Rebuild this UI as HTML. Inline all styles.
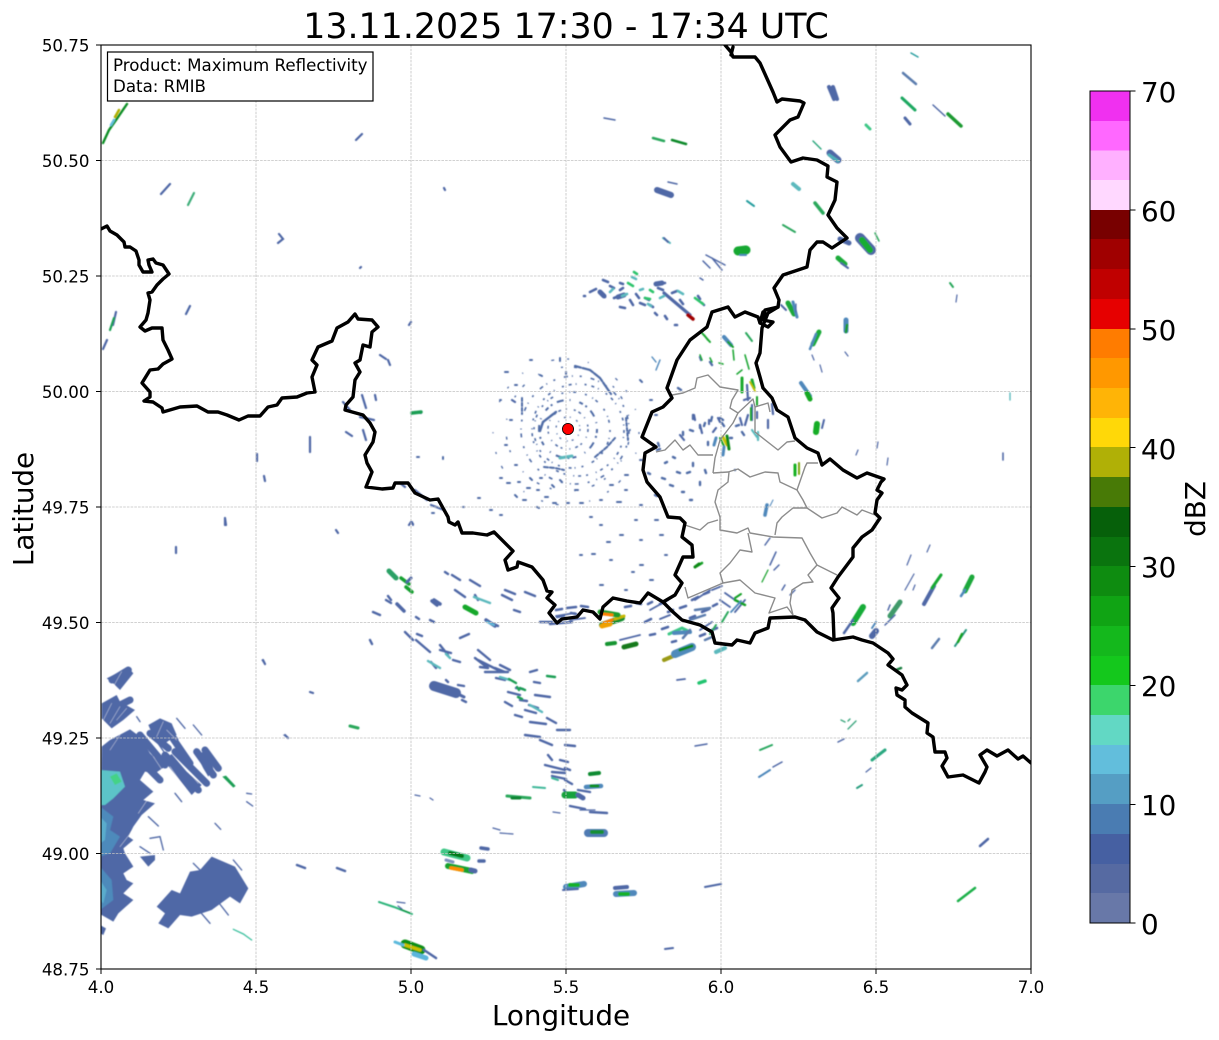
<!DOCTYPE html>
<html><head><meta charset="utf-8"><title>Radar</title>
<style>
html,body{margin:0;padding:0;background:#fff;width:1219px;height:1040px;overflow:hidden}
svg{display:block}
text{font-family:"DejaVu Sans",sans-serif;fill:#000}
.t{font-size:16.67px}
.c{font-size:27.78px}
.e path{stroke-linecap:round}
</style></head><body>
<svg width="1219" height="1040" viewBox="0 0 1219 1040" xmlns="http://www.w3.org/2000/svg">
<defs><clipPath id="ax"><rect x="101" y="45" width="930" height="924"/></clipPath>
<filter id="s" x="-5%" y="-5%" width="110%" height="110%"><feGaussianBlur stdDeviation=".4"/></filter></defs>
<rect width="1219" height="1040" fill="#fff"/>
<text x="566" y="38" style="font-size:34.8px" text-anchor="middle">13.11.2025 17:30 - 17:34 UTC</text>

<g clip-path="url(#ax)">
<g filter="url(#s)" class="e">
<!-- SW echoes -->
<g transform="translate(100 640) scale(.33333)">
<g fill="#4f68a6">
<path d="M5 320 30 300 90 268 120 290 150 340 165 355 195 380 165 400 135 395 120 420 160 455 130 480 165 490 125 525 100 560 85 590 100 600 70 625 75 640 100 680 70 700 80 720 100 730 70 760 100 780 55 820 40 845 5 825 0 825Z"/>
<path d="M20 115 85 82 100 100 60 150 40 130Z"/>
<path d="M5 190 50 165 60 185 105 210 70 240 35 265 5 235Z"/>
<path d="M145 255 180 235 215 250 230 285 195 310 165 300Z"/>
<path d="M190 360 215 342 260 395 305 435 275 465 235 415Z"/>
<path d="M290 345 320 330 340 385 325 410 310 385Z"/>
<path d="M120 650 165 645 165 660 145 680Z"/>
<path d="M170 800 215 750 240 760 270 695 300 690 335 650 405 680 445 745 420 790 390 770 335 810 275 830 240 825 205 865 175 850 195 820Z"/>
<path d="M0 855 18 865 10 885 0 880Z"/>
</g>
<g fill="none" stroke="#4f68a6" stroke-width="4">
<path d="M230 235 255 265M280 255 305 285M240 325 262 358M225 460 245 485M145 530 175 558M150 595 180 590 190 630M120 620 150 640M110 230 120 245M160 290 195 340M400 660 425 690M280 670 300 690M350 780 385 825M300 815 330 850M440 460 455 462M440 485 458 498M345 550 362 568"/>
</g>
<g fill="none" stroke="#4f68a6" stroke-width="21">
<path d="M180 250 225 300M150 280 205 325M215 290 270 370M195 345 295 450M225 335 320 430M290 335 340 405M315 330 355 385M75 315 180 420M120 285 195 375M36 120 85 90M30 210 90 180"/>
</g>
<path d="M0 390 60 395 75 440 40 475 15 495 0 495Z" fill="#5cc4c8"/>
<path d="M30 410 50 400 65 425 45 435Z" fill="#44d286"/>
<path d="M0 500 40 530 30 570 60 590 30 640 0 650ZM0 680 35 720 40 780 0 810Z" fill="#4d8abb"/>
<path d="M0 530 20 550 15 600 0 610ZM0 720 20 750 10 790 0 780Z" fill="#5aaccc"/>
<g fill="none" stroke="#fff" stroke-width="1.6" opacity=".6">
<path d="M10 240 35 190M30 250 60 200M50 240 80 205M40 140 65 95M30 330 60 285M170 290 190 245M210 380 255 445M115 520 145 475M60 620 95 575M240 740 255 715M160 350 190 395M200 270 230 300M270 400 295 430"/>
</g>
<path d="M367 410 378 407 407 438 400 443Z" fill="#1f9f55"/>
<path d="M400 868 430 882 455 900" fill="none" stroke="#3fc1a0" stroke-width="4"/>
<path d="M485 60 495 75M550 285 565 295M592 675 600 678" fill="none" stroke="#4f68a6" stroke-width="2"/>
</g>

<!-- radar speckle rings -->
<g fill="none" stroke="#4f6ca6">
<circle cx="568" cy="429" r="12" stroke-width="1.3" stroke-dasharray="2 4 1 6"/>
<circle cx="568" cy="429" r="20" stroke-width="1.5" stroke-dasharray="3 5 1 7 2 3"/>
<circle cx="568" cy="429" r="29" stroke-width="2" stroke-dasharray="4 3 2 5 7 6 1 9"/>
<circle cx="572" cy="430" r="38" stroke-width="1.6" stroke-dasharray="2 6 1 3 3 9"/>
<circle cx="578" cy="430" r="46" stroke-width="1.6" stroke-dasharray="3 4 1 8 2 5"/>
<circle cx="575" cy="430" r="54" stroke-width="1.6" stroke-dasharray="4 4 1 7 2 9"/>
<circle cx="568" cy="429" r="62" stroke-width="1.4" stroke-dasharray="2 11 3 17 1 23"/>
<circle cx="566" cy="432" r="73" stroke-width="1.3" stroke-dasharray="2 19 1 31 3 13"/>
<path d="M575 366 590 370 600 378 611 394" stroke-width="2.2" stroke-dasharray="6 2 4 1"/>
<path d="M544 467 555 468 564 470M595 457 607 447 615 438" stroke-width="2" stroke-dasharray="4 2"/>
<path d="M540 431 543 422 552 415 556 412" stroke-width="2.4" stroke-dasharray="5 1"/>
<path d="M522 398 522 414M626 418 628 440" stroke-width="2" stroke-dasharray="3 2"/>
<path d="M560 458 572 456" stroke="#5cb9bd" stroke-width="3"/>
<!-- scattered south field -->
<path stroke-width="2" d="M500 478h2M507 483h3M518 482h2M530 478l2 2M540 478h2M527 488h3M537 490h2M552 485l2 2M523 500h3M537 507l2 1M553 503h3M567 503h2M580 503h3M590 517h2M607 542h3M580 555h2M592 554h3M632 572h2M617 502h4M635 520h2M490 510h2M500 515h2M463 507h1M478 498h2M443 457v2M417 457h2M412 522l1 3M432 513h2M515 495l2 2M545 497h3M560 480l2 2M575 490h3M600 500h2M610 485h3M625 490h2M640 505h2M655 520h3M600 525h2M620 535h3M640 540h2M660 535h3M610 560h2M640 565h3M665 555h2M600 585h3M625 590h2M650 580h3M515 385h2M505 372h3M540 375l2 1M530 360h2M560 358v3M566 372v2M500 400h1M510 420h2M650 400h2M640 380l2 2M655 415h2M640 460h2M625 475h3M505 445h2M515 465h2"/>
<!-- Luxembourg speckle -->
<path stroke-width="2.4" d="M678 388l3 2M700 357l1 3M710 362l2 3M693 415v4M700 425v3M712 417l-1 4M720 418l3 2M683 432v3M722 423l2 3M705 423l-1 3M673 457l2 1M687 473l3-1M693 463v3M677 472l3 1M662 478l3 1M700 482v3M648 473l2 1M665 463l2-1M658 443l1 3M657 450l3-1M670 485l3 1M690 500h2M655 495l2 1M682 492h2M705 470l1 3M708 442v3M735 470h0M690 430l3 1M742 432l2 3M736 426l3-1M730 438h2"/>
</g>

<!-- west speckle -->
<g fill="none" stroke="#4f68a6" stroke-width="2.2">
<path d="M343 402 350 410M360 417 374 420M363 430 366 440M415 412 421 413M362 395 366 408M375 395 376 400M346 432 352 436M310 437 310 452M257 454 257 461M264 476 265 481M225 518 226 525M176 547 176 553M336 530 338 533M400 483 405 487M415 490 427 500M431 505 444 510M411 522 413 524M409 525 411 522M380 355 386 359M388 360 390 365M409 325 411 322M360 268 361 267M279 234 283 239 278 243M186 314 190 306M116 312 113 325M103 349 107 340M161 194 170 184M362 134 356 140M444 188 445 190M512 400 515 402M225 518 225 525M263 660 265 664M310 692 313 693M285 735 288 738"/>
<path d="M188 205 194 193" stroke="#3fae7a"/>
<path d="M114 318 110 330" stroke="#1f9f55"/>
<path d="M412 413 421 412" stroke="#1f9f55" stroke-width="3.5"/>
</g>
<path d="M103 143 109 130 116 120 127 104" fill="none" stroke="#0f8f25" stroke-width="2.4"/>
<path d="M115 117 119 110" stroke="#b0b006" stroke-width="2.5" fill="none"/>
<path d="M111 125 114 120" stroke="#62bedc" stroke-width="2.5" fill="none"/>

<!-- central north cluster -->
<g fill="none" stroke="#4f68a6" stroke-width="2.6">
<path d="M603 280l5 2M590 292l6-3M584 296h1M600 292l5 5M614 298l8-3M610 286l4 2M620 283l3 1M645 298l4 2M640 303l5 2M620 307l5 1M657 284l8-1M658 288l5 2M630 300l3 5M636 294l3 4M620 290l3-2M650 305l3 2M672 293l5-2M655 313l2 2M665 316l2 3M675 325h2M680 300l3 4M698 296l2 3M702 303l2 2" />
<path d="M600 292l4 4M618 297l6-2M656 284l6-1" stroke-width="5"/>
<path d="M664 293 690 315" stroke-width="3.2"/>
<path d="M632 277l4 2M622 296l5-2M648 304l3 2M678 291l5 3M610 292l3-3M640 290l3-1M660 298l4-2" stroke="#5cb9bd"/>
<path d="M628 283l5 3M650 290l3 2M645 298l5 1M695 298l8 6M634 272l3 2" stroke="#2fc46c"/>
<path d="M688 315 693 319" stroke="#a00000" stroke-width="3.5"/>
</g>

<!-- south-centre streak field -->
<g fill="none" stroke="#4f68a6" stroke-width="2.4">
<path d="M405 632 413 640M417 634 422 636M416 640 430 652M440 645 448 655M431 662 436 668M440 650 451 653M453 660 460 662M475 658 488 668M478 660 498 670M480 667 488 668M495 668 505 672M485 672 508 672M500 665 510 670M530 672 537 670M534 682 540 683M496 678 505 680M516 688 523 689M508 692 520 695M505 702 512 706M520 700 527 701M535 695 550 697M525 710 536 713M515 715 522 717M529 705 538 708M547 718 556 723M530 722 546 724M557 730 570 730M525 735 540 737M540 740 552 745M565 745 575 746M548 755 552 760M560 760 568 762M565 768 570 770M545 765 565 770M552 772 565 773M565 780 572 784M552 776 566 779M564 790 568 795M578 790 590 792M570 806 585 809M590 812 607 813M373 612 380 615M386 600 391 603M388 596 391 600M416 617 419 619M430 620 434 622M460 638 469 634M478 650 490 660M370 640 372 644M458 685 464 686M446 680 448 682M462 700 466 702M514 610 520 612M540 622 552 622M550 624 572 622M494 624 498 626M475 595 478 600M505 590 515 594M525 592 535 596M452 575 460 580M445 572 448 574M470 580 480 586M502 595 512 600M455 590 465 597"/>
<path d="M434 686 456 693" stroke-width="10"/>
<path d="M458 694 464 697" stroke-width="3"/>
<path d="M474 597 490 603" stroke="#5cb9bd"/>
<path d="M428 661 440 668M446 654 450 658M530 705 542 712M500 677 510 680" stroke="#5cb9bd"/>
<path d="M509 679 516 683M517 687 519 690M518 697 522 699M520 688 525 690M547 676 555 677" stroke="#1f9f55"/>
<path d="M465 607 476 613" stroke="#14a82c" stroke-width="5"/>
<path d="M434 600 440 604M397 604 404 611M432 601 437 605" stroke-width="3.5"/>
<path d="M389 571 396 578" stroke="#2aa065" stroke-width="5"/>
<path d="M401 578 409 584" stroke="#14a030" stroke-width="3.5"/>
<path d="M406 587 412 592" stroke="#14a030" stroke-width="3.5"/>
<path d="M411 578 407 582" stroke-width="3"/>
<path d="M486 620 495 626" stroke-width="3.5"/>
<path d="M487 622 494 625" stroke="#62bedc" stroke-width="2"/>
</g>

<!-- bottom echoes -->
<g fill="none">
<path d="M507 796 530 798" stroke="#2aa85c" stroke-width="3"/><path d="M512 798 520 798" stroke="#0c8530" stroke-width="3"/>
<path d="M533 787 545 788M552 778 558 780" stroke="#3fb89a" stroke-width="2"/>
<path d="M565 795 575 795" stroke="#16a23c" stroke-width="7"/><path d="M578 795 583 798" stroke="#4f68a6" stroke-width="5"/>
<path d="M590 774 599 773" stroke="#0e8b30" stroke-width="4"/>
<path d="M586 787 601 786" stroke="#4f88bb" stroke-width="4.5"/><path d="M591 786 598 786" stroke="#0e8f20" stroke-width="3"/>
<path d="M588 833 604 833" stroke="#4f7ab3" stroke-width="8"/><path d="M592 832 602 832" stroke="#158f35" stroke-width="4"/>
<path d="M444 852 467 858" stroke="#3fc887" stroke-width="7"/><path d="M450 853 462 856" stroke="#067a12" stroke-width="4"/>
<path d="M448 866 472 871" stroke="#14a22e" stroke-width="6"/><path d="M451 868 462 870" stroke="#ff8c00" stroke-width="3.5"/><path d="M471 870 475 871" stroke="#4f68a6" stroke-width="5"/>
<path d="M479 861 484 861M481 848 488 849" stroke="#4f68a6" stroke-width="3.5"/>
<path d="M446 860 453 862" stroke="#7a92bd" stroke-width="3"/>
<path d="M566 887 584 884" stroke="#4f88bb" stroke-width="6"/><path d="M570 885 578 885" stroke="#14b02a" stroke-width="4"/><path d="M563 890 578 889" stroke="#4f68a6" stroke-width="2"/>
<path d="M616 894 634 893" stroke="#4f88bb" stroke-width="6"/><path d="M620 894 628 894" stroke="#14b02a" stroke-width="4"/><path d="M615 888 627 887" stroke="#4f68a6" stroke-width="4"/>
<path d="M379 902 394 907 412 914" stroke="#2fb57b" stroke-width="2"/>
<path d="M400 909 410 913" stroke="#0f9030"/>
<path d="M397 902 405 903M398 906 402 909" stroke="#4f68a6" stroke-width="1.2"/>
<path d="M405 944 421 950" stroke="#0c8f18" stroke-width="9"/><path d="M405 945 420 950" stroke="#c8c000" stroke-width="3.5"/>
<path d="M395 942 403 945" stroke="#5cb9dc" stroke-width="3"/>
<path d="M414 954 426 958" stroke="#5bb5dc" stroke-width="5"/>
<path d="M424 950 436 958" stroke="#4f68a6" stroke-width="2.5"/>
<path d="M705 887 721 884M665 949 673 948" stroke="#4f68a6" stroke-width="2"/>
<path d="M415 795 420 796M430 798 433 800M493 828 500 830M500 833 513 834M553 812 560 813M580 810 595 810" stroke="#4f68a6" stroke-width="1.2"/>
<path d="M358 728 350 726" stroke="#2aa85c" stroke-width="3"/>
<path d="M337 868 345 871" stroke="#4f68a6" stroke-width="2.5"/><path d="M297 865 305 868" stroke="#4f68a6" stroke-width="2.5"/>
<path d="M695 746 707 744" stroke="#4f68a6" stroke-width="1.4"/>
</g>

<!-- dark echoes near border -->
<g fill="none">
<path stroke="#4f68a6" stroke-width="2.6" d="M556 610l6-1M567 608l9-1M581 606l7 1M557 617l7-1M571 613l5 1M625 607l6-1M636 603l5 1M648 604l4-2M660 604l5-2M645 622l6-3M668 612l5-2M680 608l6-2M692 600l6-3M704 594l5-2M650 635l5-1M662 629l6-2M690 618l5-2M702 612l7-3M713 606l4-2M672 642l4-1M700 636l5-2M712 630l5-2"/>
<path d="M602 625 622 618" stroke="#148f30" stroke-width="6"/><path d="M604 623 612 620" stroke="#ff7c00" stroke-width="3"/><path d="M615 619 624 616" stroke="#c8b800" stroke-width="3"/>
<path d="M602 626 610 624" stroke="#f0a000" stroke-width="5"/>
<path d="M600 612 618 615" stroke="#1e9b2a" stroke-width="5"/><path d="M603 614 612 615" stroke="#ff8000" stroke-width="3"/>
<path d="M607 644 615 643" stroke="#179530" stroke-width="4"/>
<path d="M624 647 636 644" stroke="#127a1a" stroke-width="5"/>
<path d="M664 660 678 654" stroke="#9a9a14" stroke-width="4"/>
<path d="M675 654 692 647" stroke="#4f8abb" stroke-width="8"/><path d="M680 650 692 646" stroke="#0d8a1a" stroke-width="3"/>
<path d="M669 634 682 628 690 632" stroke="#3fc887" stroke-width="3"/><path d="M674 633 690 632" stroke="#4f88bb" stroke-width="4"/>
<path d="M699 683 705 681" stroke="#22c470" stroke-width="3.5"/>
<path d="M716 652 725 648" stroke="#5cb9bd" stroke-width="4"/>
<path d="M677 680 685 679M660 619 670 615M650 610 668 600M695 600 710 590M712 590 722 586M720 600 730 607M745 600 735 612M620 640 640 635M556 616 575 613M570 620 585 618M700 630 712 622M725 593 735 600" stroke="#4f68a6" stroke-width="1.8"/>
<path d="M690 620 705 615M695 610 710 608M683 638 690 630M705 640 712 637" stroke="#5c7dae" stroke-width="2.5"/>
<path d="M697 566 702 563M735 600 745 605" stroke="#14a028" stroke-width="2.5"/>
<path d="M722 622 728 612M710 634 716 625" stroke="#2aa85c" stroke-width="2"/>
</g>

<!-- Luxembourg cluster -->
<g fill="none">
<path d="M702 333 710 342M704 335 708 340" stroke="#1aa832" stroke-width="2"/>
<path d="M724 337 731 345" stroke="#4f88bb" stroke-width="4"/><path d="M728 342 733 347" stroke="#14a028" stroke-width="2"/>
<path d="M746 333 752 341" stroke="#2aa85c" stroke-width="2"/>
<path d="M745 355 749 369M742 370 737 374M700 355 702 360M710 358 712 362M719 363 723 364M733 350 734 360" stroke="#22a838" stroke-width="1.6"/>
<path d="M742 378 742 392M752 380 754 388" stroke="#1cab2e" stroke-width="3"/><path d="M750 382 755 391" stroke="#c0c000" stroke-width="1.8"/>
<path d="M747 385 748 400M744 400 750 398M752 405 752 420M748 415 745 425M757 412 757 418M768 420 768 428M772 404 773 414M740 418 742 425M718 418 720 422M713 432 716 428M700 425 702 433M694 415 695 420M709 420 709 424M680 435 684 440" stroke="#4f68a6" stroke-width="2.2"/>
<path d="M751 408 751 420M757 397 757 405" stroke="#14a028" stroke-width="2"/>
<path d="M720 438 724 446" stroke="#14a028" stroke-width="2"/><path d="M723 437 727 445" stroke="#c4c400" stroke-width="3"/><path d="M727 436 729 449" stroke="#0c8a18" stroke-width="3"/>
<path d="M716 438 714 445M724 447 723 455" stroke="#4f88bb" stroke-width="3"/>
<path d="M752 430 757 437M758 432 758 440" stroke="#5cb9bd" stroke-width="2.2"/>
<path d="M795 465 795 475" stroke="#14b020" stroke-width="3"/><path d="M799 463 799 474" stroke="#7aa80c" stroke-width="2"/>
<path d="M767 505 765 515" stroke="#4f88bb" stroke-width="3.5"/><path d="M773 500 770 506" stroke="#4f88bb" stroke-width="1"/>
<path d="M695 567 699 564" stroke="#0c8a18" stroke-width="3"/>
<path d="M770 538 765 545M776 552 770 565M779 565 774 570M785 585 782 590M795 590 790 595" stroke="#4f68a6" stroke-width="1.5"/>
<path d="M768 570 762 582" stroke="#14a028" stroke-width="1.2"/>
<path d="M741 601 731 612" stroke="#4f88bb" stroke-width="1.8"/>
<path d="M735 598 741 594" stroke="#14a028" stroke-width="2"/>
<path d="M660 360 656 370M652 357 656 362" stroke="#4f88bb" stroke-width="1.4"/>
<path d="M788 303 794 314" stroke="#1ca83a" stroke-width="5"/><path d="M793 302 797 317" stroke="#4f88bb" stroke-width="3"/><path d="M781 305 786 310" stroke="#4f68a6" stroke-width="2"/>
<path d="M813 344 819 332" stroke="#1cab3a" stroke-width="5"/><path d="M810 349 816 334" stroke="#4f88bb" stroke-width="2.5"/>
<path d="M846 320 846 331" stroke="#4f88bb" stroke-width="5"/><path d="M847 325 846 332" stroke="#1a9a2a" stroke-width="2.5"/>
<path d="M801 383 810 396" stroke="#4f88bb" stroke-width="4"/><path d="M807 393 810 399" stroke="#14a824" stroke-width="5"/>
<path d="M817 424 816 432" stroke="#14ad28" stroke-width="6"/><path d="M824 420 822 428" stroke="#4f68a6" stroke-width="2"/>
<path d="M796 304 796 312M820 365 822 372M812 355 814 360M845 352 848 356M856 455 858 450" stroke="#4f68a6" stroke-width="1.2"/>
<path d="M877 448 878 442M887 465 888 458" stroke="#4f68a6" stroke-width="1.2"/>
</g>

<!-- NE echoes -->
<g fill="none">
<path d="M829 87 834 99M833 87 837 99" stroke="#4f68a6" stroke-width="4"/>
<path d="M866 125 870 129" stroke="#3fc887" stroke-width="3"/>
<path d="M830 153 838 160" stroke="#4f68a6" stroke-width="7"/><path d="M829 155 838 161" stroke="#4fb0b8" stroke-width="3"/>
<path d="M813 141 821 149" stroke="#2fa880" stroke-width="1.5"/>
<path d="M793 184 799 189" stroke="#5cb9bd" stroke-width="4"/><path d="M747 201 754 206" stroke="#2a9fa0" stroke-width="2"/>
<path d="M783 225 795 232" stroke="#2fa860" stroke-width="2"/>
<path d="M815 203 823 213" stroke="#2aa85c" stroke-width="3.5"/>
<path d="M860 238 871 250" stroke="#4f68a6" stroke-width="10"/><path d="M862 240 870 250" stroke="#14ad30" stroke-width="6"/>
<path d="M875 233 879 241" stroke="#2aa85c" stroke-width="1.5"/><path d="M840 239 849 243" stroke="#4f68a6" stroke-width="5"/>
<path d="M838 258 845 264" stroke="#1cab3a" stroke-width="5"/>
<path d="M841 263 848 268" stroke="#4f68a6" stroke-width="2"/>
<path d="M738 251 746 250" stroke="#14a830" stroke-width="9"/><path d="M740 255 746 255" stroke="#4f88bb" stroke-width="2"/>
<path d="M706 255 725 265M712 258 722 270M703 261 710 268M700 278 703 280" stroke="#4f68a6" stroke-width="1.5"/>
<path d="M663 238 670 243" stroke="#5cb9bd" stroke-width="2"/><path d="M664 238 668 242" stroke="#4f68a6" stroke-width="2"/>
<path d="M657 190 671 195" stroke="#4f68a6" stroke-width="6"/><path d="M668 182 677 184" stroke="#4f68a6" stroke-width="1.5"/>
<path d="M653 138 664 141" stroke="#2aa85c" stroke-width="2.5"/><path d="M672 140 686 144" stroke="#0c8a2a" stroke-width="2.5"/>
<path d="M604 118 615 120" stroke="#4f68a6" stroke-width="1.5"/>
<path d="M903 73 916 84" stroke="#5c7dae" stroke-width="2.5"/>
<path d="M911 53 918 57" stroke="#2a9fa0" stroke-width="1.5"/>
<path d="M902 98 915 110" stroke="#1ca860" stroke-width="3"/>
<path d="M905 118 910 124" stroke="#4f68a6" stroke-width="3"/>
<path d="M933 105 945 116" stroke="#4f68a6" stroke-width="1.5"/>
<path d="M948 114 961 126" stroke="#1a9a30" stroke-width="3.5"/>
<path d="M950 283 953 287" stroke="#2aa85c" stroke-width="2"/>
<path d="M957 295 956 302" stroke="#4f68a6" stroke-width="1.2"/>
<path d="M1010 393 1010 400" stroke="#5cb9bd" stroke-width="1.4"/>
<path d="M1003 453 1003 460" stroke="#4f68a6" stroke-width="1.6"/>
</g>

<!-- SE echoes -->
<g fill="none">
<path d="M853 623 863 607" stroke="#16ac38" stroke-width="6"/><path d="M844 633 853 620" stroke="#4f68a6" stroke-width="2.5"/>
<path d="M872 636 876 631" stroke="#4f68a6" stroke-width="6"/>
<path d="M872 628 876 622" stroke="#4f88bb" stroke-width="2"/>
<path d="M890 616 900 602" stroke="#3f9a6a" stroke-width="5"/>
<path d="M890 605 888 610M895 615 885 625" stroke="#4f68a6" stroke-width="1.5"/>
<path d="M924 604 934 586" stroke="#4f68a6" stroke-width="4"/>
<path d="M932 588 941 575" stroke="#14a830" stroke-width="3"/>
<path d="M905 590 914 574M930 545 927 552M907 565 911 555M915 585 913 590" stroke="#4f68a6" stroke-width="1.2"/>
<path d="M965 591 972 577" stroke="#1aa83a" stroke-width="5"/><path d="M961 596 965 590" stroke="#4f88bb" stroke-width="2.5"/>
<path d="M932 648 939 639" stroke="#5c7dae" stroke-width="2.5"/>
<path d="M955 646 966 630" stroke="#2a9a80" stroke-width="2"/><path d="M958 642 962 634" stroke="#14a020" stroke-width="2.5"/>
<path d="M858 681 867 673" stroke="#5c9dbd" stroke-width="2.5"/>
<path d="M896 670 901 668" stroke="#127a3a" stroke-width="2.5"/>
<path d="M841 720 845 722M848 729 856 721M848 721 850 719" stroke="#3fa880" stroke-width="1.4"/>
<path d="M838 742 844 739" stroke="#4f68a6" stroke-width="1.5"/>
<path d="M872 760 885 750" stroke="#2aa880" stroke-width="3"/>
<path d="M866 772 871 768" stroke="#4f68a6" stroke-width="1.2"/>
<path d="M857 788 862 785" stroke="#2a9f80" stroke-width="2"/>
<path d="M759 777 770 770" stroke="#4f88bb" stroke-width="2"/><path d="M760 750 772 745" stroke="#2aa860" stroke-width="2"/><path d="M773 767 782 762" stroke="#4f68a6" stroke-width="1.5"/>
<path d="M980 846 988 839" stroke="#4f68a6" stroke-width="2.5"/>
<path d="M958 901 975 888" stroke="#1ab04a" stroke-width="2.5"/>
</g>
</g>

<!-- Grid -->
<g stroke="#c2c2c2" stroke-width=".8" stroke-dasharray="2.6 1.1" fill="none">
<path d="M256 45V969M411 45V969M566 45V969M721 45V969M876 45V969"/>
<path d="M101 160.5H1031M101 276H1031M101 391.5H1031M101 507H1031M101 622.5H1031M101 738H1031M101 853.5H1031"/>
</g>

<!-- internal gray borders -->
<g fill="none" stroke="#8c8c8c" stroke-width="1.4" stroke-linejoin="round">
<path d="M672 395 683 393 695 388 697 378 708 375 720 387 738 390 732 400 730 408 738 413 733 423 720 440 715 458 713 473"/>
<path d="M656 452 665 450 675 440 683 450 690 445 698 455 713 455"/>
<path d="M738 413 753 399 755 407 768 403 770 412M755 407 755 432 778 450 787 442 795 441"/>
<path d="M713 473 728 472 738 469 750 477 765 472 778 473 780 482 797 490 803 500 807 508 793 508 782 517 777 523 775 535"/>
<path d="M797 490 805 467 807 463 818 463"/>
<path d="M729 472 728 482 718 490 715 502 720 517 720 530 737 533 748 528 750 533 773 537 802 538 810 553 817 565 837 575"/>
<path d="M685 525 700 530 708 523 718 520"/>
<path d="M807 508 822 518 837 513 842 507 857 515 862 510 875 515"/>
<path d="M748 533 752 552 740 550 730 563 720 573 723 583 740 580 755 593 775 598 769 613 787 607 793 615"/>
<path d="M723 583 688 598 685 587"/>
<path d="M817 565 808 575 813 582 803 583 792 590 790 603 793 615"/>
</g>

<!-- black borders -->
<g fill="none" stroke="#000" stroke-width="3.4" stroke-linejoin="round" stroke-linecap="round">
<path d="M101 229 107 226 110 231 117 235 124 242 125 247 130 247 136 251 139 260 139 265 143 272 152 272 149 265 148 260 153 259 156 263 163 265 169 274 163 279 157 285 152 292 148 293 150 300 148 313 146 320 140 327 145 331 152 328 162 328 163 340 168 350 172 359 163 364 158 369 150 370 142 383 150 392 150 397 144 401 153 402 162 408 163 412 180 407 197 406 208 412 218 412 227 415 239 420 248 416 260 416 268 407 277 405 282 398 297 397 307 393 315 392 312 377 317 365 312 360 318 347 332 341 337 328 348 322 355 314 358 319 372 320 378 327 372 332 370 347 363 345 360 360 355 363 360 372 355 380 353 397 346 405 345 410 363 415 370 423 375 432 373 442 365 455 367 463 372 472 366 487 382 489 393 488 395 483 408 483 415 493 430 500 438 499 448 517 449 522 455 525 458 522 462 533 473 533 487 535 494 532 513 551 505 560 508 570 517 567 518 562 532 567 543 580 547 591 552 592 547 598 555 605 549 613 557 623 562 619 577 617 583 610 593 612 600 619 603 607 613 598 627 601 640 603 648 593 663 602 673 612 682 620 700 625 712 632 715 643 732 645 737 640 750 643 755 633 768 628 770 618 795 617 805 620 817 632 833 640 853 637 862 640 873 643 888 653 893 659 888 665 902 675 907 685 902 690 896 688 897 695 905 700 905 707 912 713 928 723 927 733 933 737 935 752 945 752 947 758 942 766 948 777 963 775 979 783 985 772 987 767 980 755 987 750 997 756 1008 750 1018 759 1023 756 1031 763"/>
<path d="M834 639 833 613 832 608 839 598 831 588 838 577 853 557 853 548 862 537 872 530 880 518 875 513 877 500 882 493 877 490 881 482 884 479 867 473 857 478 843 470 830 459 822 465 818 453 807 448 795 438 788 417 777 410 772 398 763 388 760 377 756 363 760 353 762 328 768 313 778 307 765 310 763 320 773 322 768 327 760 323 763 312"/>
<path d="M663 602 675 595 682 583 675 575 683 557 693 557 692 545 682 537 685 523 680 518 668 517 660 497 647 482 643 470 645 453 656 447 642 437 652 412 663 407 672 398 667 388 677 360 690 340 707 327 712 312 728 307 735 317 745 312 758 317 760 323"/>
<path d="M778 307 779 300 774 288 783 275 807 267 810 250 817 242 823 242 832 248 847 238 837 228 828 215 835 200 837 182 827 177 828 166 817 160 803 158 791 162 780 147 775 135 790 120 798 117 804 103 800 101 782 99 777 102 773 92 760 63 755 57 733 57 731 52 725 45M733 47 731 55"/>
</g>

<circle cx="568" cy="429" r="5.6" fill="#f00" stroke="#000" stroke-width=".8"/>
</g>

<rect x="101" y="45" width="930" height="924" fill="none" stroke="#000" stroke-width="1.1"/>
<!-- Ticks -->
<g stroke="#000" stroke-width="1" fill="none">
<path d="M101 969v5M256 969v5M411 969v5M566 969v5M721 969v5M876 969v5M1031 969v5"/>
<path d="M96 45h5M96 160.5h5M96 276h5M96 391.5h5M96 507h5M96 622.5h5M96 738h5M96 853.5h5M96 969h5"/>
</g>
<g text-anchor="middle">
<text class="t" x="101" y="993">4.0</text><text class="t" x="256" y="993">4.5</text><text class="t" x="411" y="993">5.0</text><text class="t" x="566" y="993">5.5</text><text class="t" x="721" y="993">6.0</text><text class="t" x="876" y="993">6.5</text><text class="t" x="1031" y="993">7.0</text>
</g>
<g text-anchor="end">
<text class="t" x="89.500" y="51.500">50.75</text><text class="t" x="89.500" y="167">50.50</text><text class="t" x="89.500" y="282.500">50.25</text><text class="t" x="89.500" y="398">50.00</text><text class="t" x="89.500" y="513.500">49.75</text><text class="t" x="89.500" y="629">49.50</text><text class="t" x="89.500" y="744.500">49.25</text><text class="t" x="89.500" y="860">49.00</text><text class="t" x="89.500" y="975.500">48.75</text>
</g>
<text class="c" x="561" y="1025" text-anchor="middle">Longitude</text>
<text class="c" transform="translate(33 509) rotate(-90)" text-anchor="middle">Latitude</text>

<!-- legend box -->
<rect x="107.5" y="52" width="265.500" height="49" fill="#fff" stroke="#000" stroke-width="1.2"/>
<text class="t" x="113" y="71">Product: Maximum Reflectivity</text>
<text class="t" x="113" y="92">Data: RMIB</text>

<!-- colorbar -->
<g shape-rendering="crispEdges">
<rect x="1090" y="91" width="40" height="30.200" fill="#f030f0"/>
<rect x="1090" y="121" width="40" height="30.200" fill="#ff68ff"/>
<rect x="1090" y="150.500" width="40" height="30.200" fill="#ffb0ff"/>
<rect x="1090" y="180" width="40" height="30.200" fill="#ffd8ff"/>
<rect x="1090" y="210" width="40" height="30.200" fill="#780000"/>
<rect x="1090" y="239" width="40" height="30.200" fill="#a00000"/>
<rect x="1090" y="269" width="40" height="30.200" fill="#c00000"/>
<rect x="1090" y="299" width="40" height="30.200" fill="#e60000"/>
<rect x="1090" y="329" width="40" height="30.200" fill="#ff7c00"/>
<rect x="1090" y="358" width="40" height="30.200" fill="#ff9800"/>
<rect x="1090" y="388" width="40" height="30.200" fill="#ffb406"/>
<rect x="1090" y="418" width="40" height="30.200" fill="#ffd808"/>
<rect x="1090" y="447" width="40" height="30.200" fill="#b0b006"/>
<rect x="1090" y="477" width="40" height="30.200" fill="#487a06"/>
<rect x="1090" y="507" width="40" height="30.200" fill="#06600a"/>
<rect x="1090" y="537" width="40" height="30.200" fill="#0a740e"/>
<rect x="1090" y="566" width="40" height="30.200" fill="#0e8c10"/>
<rect x="1090" y="596" width="40" height="30.200" fill="#10a414"/>
<rect x="1090" y="626" width="40" height="30.200" fill="#14b81c"/>
<rect x="1090" y="656" width="40" height="30.200" fill="#14c81c"/>
<rect x="1090" y="685" width="40" height="30.200" fill="#3cd66c"/>
<rect x="1090" y="715" width="40" height="30.200" fill="#62d8c4"/>
<rect x="1090" y="745" width="40" height="30.200" fill="#62bedc"/>
<rect x="1090" y="774" width="40" height="30.200" fill="#559ec4"/>
<rect x="1090" y="804" width="40" height="30.200" fill="#4a7cb2"/>
<rect x="1090" y="834" width="40" height="30.200" fill="#4660a2"/>
<rect x="1090" y="864" width="40" height="30.200" fill="#566aa2"/>
<rect x="1090" y="893" width="40" height="30" fill="#6878a8"/>
</g>
<rect x="1090" y="91" width="40" height="832" fill="none" stroke="#000" stroke-width="1"/>
<path d="M1130 91h5.500M1130 210h5.500M1130 329h5.500M1130 447.500h5.500M1130 566.500h5.500M1130 685.500h5.500M1130 804.500h5.500M1130 923h5.500" stroke="#000" stroke-width="1"/>
<g>
<text class="c" x="1141" y="102">70</text><text class="c" x="1141" y="221">60</text><text class="c" x="1141" y="340">50</text><text class="c" x="1141" y="459">40</text><text class="c" x="1141" y="577">30</text><text class="c" x="1141" y="696">20</text><text class="c" x="1141" y="815">10</text><text class="c" x="1141" y="934">0</text>
</g>
<text class="c" transform="translate(1205 509) rotate(-90)" text-anchor="middle">dBZ</text>
</svg>
</body></html>
